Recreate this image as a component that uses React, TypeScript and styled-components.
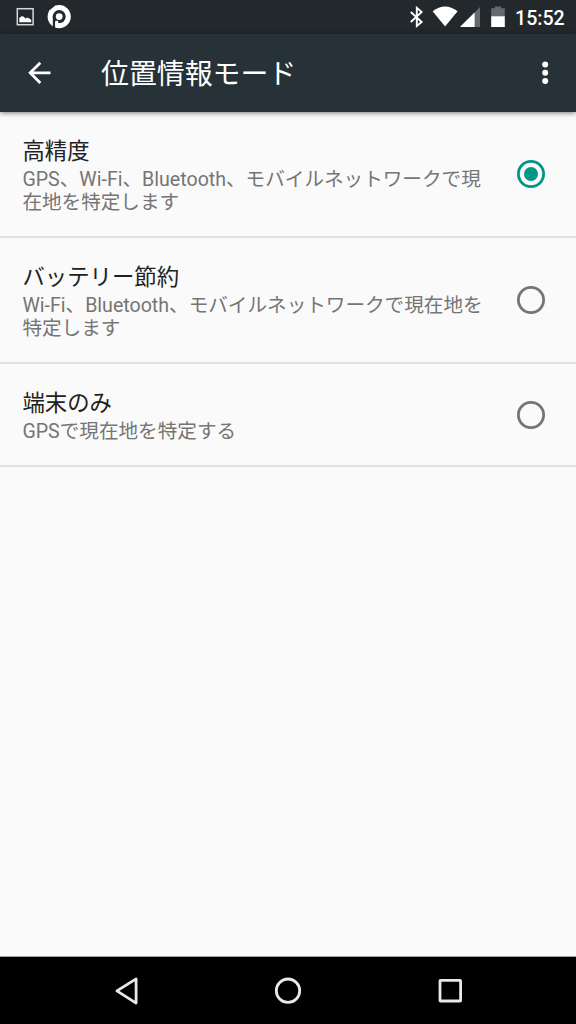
import React, { useState } from "react";
import styled, { createGlobalStyle } from "styled-components";

const GlobalStyle = createGlobalStyle`
  * { box-sizing: border-box; }
  body { margin: 0; background: #fafafa; }
`;

const Screen = styled.div`
  width: 576px;
  height: 1024px;
  display: flex;
  flex-direction: column;
  overflow: hidden;
  background: #fafafa;
  font-family: Roboto, "Noto Sans CJK JP", sans-serif;
`;

const StatusBar = styled.header`
  height: 34px;
  flex: none;
  display: flex;
  justify-content: space-between;
  background: #22282b;
  color: #fff;
`;

const StatusGroup = styled.div`
  display: flex;
  align-items: center;
`;

const Clock = styled.time`
  width: 61px;
  font-size: 19.6px;
  line-height: 34px;
  font-weight: 500;
  padding-top: 3px;
`;

const AppBar = styled.div`
  height: 78px;
  flex: none;
  display: flex;
  align-items: center;
  background: #263238;
  color: #fff;
  box-shadow: 0 1px 5px rgba(0, 0, 0, 0.5);
`;

const IconButton = styled.button<{ $width: number }>`
  width: ${(p) => p.$width}px;
  height: 78px;
  padding: 0;
  border: 0;
  background: none;
  display: block;
`;

const Title = styled.h1`
  flex: 1;
  margin: 0;
  padding-top: 3px;
  font-size: 27.9px;
  line-height: 40px;
  font-weight: 400;
`;

const Options = styled.main`
  flex: 1;
`;

const Option = styled.div<{ $height: number }>`
  height: ${(p) => p.$height}px;
  display: flex;
  align-items: center;
  justify-content: space-between;
  padding: 0 31px 0 22.4px;
  border-bottom: 2px solid #e0e0e0;
`;

const OptionText = styled.div`
  padding-top: 3px;
`;

const OptionTitle = styled.div`
  font-size: 22.4px;
  line-height: 31px;
  color: #212121;
`;

const Summary = styled.div`
  padding-top: 2px;
  font-size: 19.6px;
  line-height: 22.6px;
  color: #757575;
  white-space: pre-line;
`;

const Radio = styled.svg`
  display: block;
  width: 28px;
  height: 28px;
  flex: none;
`;

const NavBar = styled.nav`
  height: 68px;
  flex: none;
  background: #000;
  border-top: 1px solid #a0a5a7;
  display: flex;
  justify-content: center;
`;

const NavButton = styled.button`
  width: 162px;
  height: 67px;
  padding: 0;
  border: 0;
  background: none;
`;

const modes = [
  {
    title: "高精度",
    summary: "GPS、Wi-Fi、Bluetooth、モバイルネットワークで現\n在地を特定します",
    height: 126,
  },
  {
    title: "バッテリー節約",
    summary: "Wi-Fi、Bluetooth、モバイルネットワークで現在地を\n特定します",
    height: 126,
  },
  { title: "端末のみ", summary: "GPSで現在地を特定する", height: 103 },
];

function NotificationIcons() {
  return (
    <svg width="100" height="34" viewBox="0 0 100 34">
      <rect x="17.3" y="8.7" width="15.8" height="16" fill="none" stroke="#d5d7d8" strokeWidth="1.5" />
      <path d="M19.3 22.3v-4.2l2.2-1.800 2 .2 2 2.100 2-1.200 3.700 2.400v2.500z" fill="#fff" />
      <circle cx="59.200" cy="16.600" r="11.600" fill="#fff" />
      <circle cx="59.200" cy="16.600" r="6.500" fill="#22282b" />
      <path d="M52.800 16.600h2.500V29l-2.500-1.200z" fill="#22282b" />
      <path d="M55.300 20.800h2.900v6.600h-2.900z" fill="#fff" />
      <path d="M49.500 8.600l4.300-3.600.6 1.200-4 3.400z" fill="#22282b" />
      <circle cx="59.200" cy="16.600" r="3.400" fill="#fff" />
    </svg>
  );
}

function SystemIcons() {
  return (
    <svg width="110" height="34" viewBox="405 0 110 34">
      <path d="M410.800 12l10.800 10-4.800 3.900V7.900l4.800 4.100-10.800 10" fill="none" stroke="#fff" strokeWidth="1.900" />
      <path d="M432.600 11.200Q445 1.700 457.600 11.200L445.100 26.600z" fill="#fff" />
      <path d="M480 7v20h-20z" fill="#65696b" />
      <path d="M474.600 12.400V27H460z" fill="#fff" />
      <path d="M491.200 8.300h3.600V6.400h6.300v1.900h3.700V17h-13.600z" fill="#65696b" />
      <path d="M491.200 16.300h13.600V27h-13.600z" fill="#fff" />
    </svg>
  );
}

function RadioMark({ checked }: { checked: boolean }) {
  const color = checked ? "#009688" : "#757575";
  return (
    <Radio viewBox="0 0 28 28">
      <circle cx="14" cy="14" r="12.600" fill="none" stroke={color} strokeWidth="2.800" />
      {checked && <circle cx="14" cy="14" r="7" fill={color} />}
    </Radio>
  );
}

export default function App() {
  const [selected, setSelected] = useState(0);
  return (
    <>
      <GlobalStyle />
      <Screen>
        <StatusBar>
          <StatusGroup>
            <NotificationIcons />
          </StatusGroup>
          <StatusGroup>
            <SystemIcons />
            <Clock>15:52</Clock>
          </StatusGroup>
        </StatusBar>
        <AppBar>
          <IconButton $width={101}>
            <svg width="101" height="78" viewBox="0 0 101 78">
              <path d="M50.500 38.800H30.500M40.300 28.700L30.200 38.800l10.100 10.100" fill="none" stroke="#fff" strokeWidth="2.800" />
            </svg>
          </IconButton>
          <Title>位置情報モード</Title>
          <IconButton $width={62}>
            <svg width="62" height="78" viewBox="0 0 62 78" fill="#fff">
              <circle cx="31.200" cy="30.500" r="3" />
              <circle cx="31.200" cy="38.800" r="3" />
              <circle cx="31.200" cy="47.100" r="3" />
            </svg>
          </IconButton>
        </AppBar>
        <Options>
          {modes.map((mode, i) => (
            <Option key={mode.title} $height={mode.height} onClick={() => setSelected(i)}>
              <OptionText>
                <OptionTitle>{mode.title}</OptionTitle>
                <Summary>{mode.summary}</Summary>
              </OptionText>
              <RadioMark checked={selected === i} />
            </Option>
          ))}
        </Options>
        <NavBar>
          <NavButton>
            <svg width="162" height="67" viewBox="0 0 162 67">
              <path d="M91.100 21.900v24.200L71.900 33.900z" fill="none" stroke="#e8e8e8" strokeWidth="2.800" strokeLinejoin="round" />
            </svg>
          </NavButton>
          <NavButton>
            <svg width="162" height="67" viewBox="0 0 162 67">
              <circle cx="81" cy="33.700" r="11.700" fill="none" stroke="#e8e8e8" strokeWidth="2.800" />
            </svg>
          </NavButton>
          <NavButton>
            <svg width="162" height="67" viewBox="0 0 162 67">
              <rect x="71" y="23.400" width="20.600" height="20.600" rx=".5" fill="none" stroke="#e8e8e8" strokeWidth="2.800" strokeLinejoin="round" />
            </svg>
          </NavButton>
        </NavBar>
      </Screen>
    </>
  );
}
